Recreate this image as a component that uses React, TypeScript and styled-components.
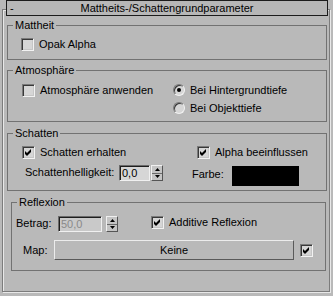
import React from 'react';
import styled, { createGlobalStyle } from 'styled-components';

const GlobalStyle = createGlobalStyle`
  html, body {
    margin: 0;
    padding: 0;
    background: #b9b9b9;
  }
  body {
    font-family: 'Liberation Sans', Arial, sans-serif;
    font-size: 11px;
    color: #000;
  }
  * {
    box-sizing: border-box;
  }
`;

const Screen = styled.div`
  width: 333px;
  height: 296px;
  padding: 0 3px 0 2px;
  background: #b9b9b9;
  overflow: hidden;
`;

const Rollout = styled.div`
  margin-top: 9px;
  width: 328px;
  height: 283px;
  border: 1px solid #7c7c7c;
  box-shadow: inset 1px 1px 0 #e8e8e8, 1px 1px 0 #e8e8e8;
  display: flex;
  flex-direction: column;
`;

const RolloutHeader = styled.div`
  margin: -10px 1px 0 3px;
  height: 16px;
  border: 1px solid #1c1c1c;
  background: #b7b7b7;
  display: grid;
  grid-template-columns: 14px 1fr 14px;
  align-items: center;
  line-height: 14px;
`;

const Collapse = styled.span`
  padding-left: 3px;
`;

const HeaderTitle = styled.span`
  text-align: center;
  white-space: nowrap;
`;

const Group = styled.fieldset<{ $top: number; $left?: number; $right?: number }>`
  margin: ${p => p.$top}px ${p => p.$right ?? 2}px 0 ${p => p.$left ?? 4}px;
  padding: 0;
  border: 1px solid #727272;
  min-inline-size: 0;
`;

const Legend = styled.legend`
  margin-left: 5px;
  padding: 0 2px;
  line-height: 13px;
  font-size: 11px;
`;

const MattBody = styled.div`
  padding: 6px 0 8px 13px;
`;

const AtmoBody = styled.div`
  display: flex;
  padding: 4px 0 4px 14px;
`;

const AtmoLeft = styled.div`
  width: 151px;
  display: flex;
  flex-direction: column;
`;

const RadioList = styled.div`
  display: flex;
  flex-direction: column;
`;

const ShadowBody = styled.div`
  padding: 5px 0 4px 14px;
`;

const TwoCols = styled.div`
  display: grid;
  grid-template-columns: 175px auto;
  height: 14px;
  align-items: center;
`;

const FieldRow = styled.div<{ $mt: number; $h: number; $align?: string }>`
  display: flex;
  align-items: ${p => p.$align ?? 'center'};
  margin-top: ${p => p.$mt}px;
  height: ${p => p.$h}px;
`;

const ReflBody = styled.div`
  padding: 7px 0 10px 4px;
`;

const CheckRow = styled.label<{ $h?: number }>`
  display: flex;
  align-items: center;
  gap: 5px;
  height: ${p => p.$h ?? 13}px;
  line-height: 13px;
  white-space: nowrap;
`;

const Box = styled.span`
  width: 13px;
  height: 13px;
  flex: none;
  background: #d6d6d6;
  border: 1px solid;
  border-color: #7a7a7a #f2f2f2 #f2f2f2 #7a7a7a;
  box-shadow: inset 1px 1px 0 #383838, inset -1px -1px 0 #c6c6c6;
  display: flex;
  align-items: center;
  justify-content: center;
`;

const RadioRow = styled.label`
  display: flex;
  align-items: center;
  gap: 5px;
  height: 18px;
  white-space: nowrap;
`;

const RadioDot = styled.span<{ $on?: boolean }>`
  width: 12px;
  height: 12px;
  flex: none;
  border-radius: 50%;
  background: #d6d6d6;
  border: 1px solid;
  border-color: #7a7a7a #f2f2f2 #f2f2f2 #7a7a7a;
  box-shadow: inset 1px 1px 0 #383838;
  display: flex;
  align-items: center;
  justify-content: center;
  &::after {
    content: '';
    width: 4px;
    height: 4px;
    border-radius: 50%;
    background: ${p => (p.$on ? '#000' : 'transparent')};
  }
`;

const FieldLabel = styled.span<{ $w: number; $ml?: number; $lh?: number }>`
  width: ${p => p.$w}px;
  margin-left: ${p => p.$ml ?? 0}px;
  line-height: ${p => p.$lh ?? 14}px;
  flex: none;
  white-space: nowrap;
`;

const NumField = styled.div<{ $w: number; $disabled?: boolean }>`
  width: ${p => p.$w}px;
  height: 16px;
  flex: none;
  padding-left: 2px;
  line-height: 14px;
  background: ${p => (p.$disabled ? '#c9c9c9' : '#d6d6d6')};
  color: ${p => (p.$disabled ? '#8a8a8a' : '#000')};
  border: 1px solid;
  border-color: #6a6a6a #f0f0f0 #f0f0f0 #6a6a6a;
  box-shadow: inset 1px 1px 0 #1e1e1e;
`;

const Spin = styled.div<{ $ml: number }>`
  width: 12px;
  height: 16px;
  margin-left: ${p => p.$ml}px;
  flex: none;
  display: flex;
  flex-direction: column;
  background: #c4c4c4;
  border: 1px solid;
  border-color: #f0f0f0 #555 #555 #f0f0f0;
`;

const SpinHalf = styled.div`
  flex: 1;
  display: flex;
  align-items: center;
  justify-content: center;
  & + & {
    border-top: 1px solid #6a6a6a;
  }
`;

const Swatch = styled.div`
  width: 67px;
  height: 20px;
  flex: none;
  align-self: flex-end;
  background: #000;
`;

const MapButton = styled.button`
  width: 240px;
  height: 20px;
  flex: none;
  padding: 0;
  font: inherit;
  color: #000;
  background: #b9b9b9;
  border: 1px solid;
  border-color: #ececec #5a5a5a #5a5a5a #ececec;
`;

const Check = () => (
  <svg width="7" height="7" viewBox="0 0 7 7">
    <polygon points="0,2 2,4 6,0 6,3 2,7 0,5" fill="#000" />
  </svg>
);

const Checkbox: React.FC<{ checked?: boolean; label?: string; h?: number }> = ({ checked, label, h }) => (
  <CheckRow $h={h}>
    <Box>{checked && <Check />}</Box>
    {label && <span>{label}</span>}
  </CheckRow>
);

const Spinner: React.FC<{ ml: number }> = ({ ml }) => (
  <Spin $ml={ml}>
    <SpinHalf>
      <svg width="5" height="3" viewBox="0 0 5 3">
        <polygon points="2.5,0 5,3 0,3" fill="#000" />
      </svg>
    </SpinHalf>
    <SpinHalf>
      <svg width="5" height="3" viewBox="0 0 5 3">
        <polygon points="0,0 5,0 2.5,3" fill="#000" />
      </svg>
    </SpinHalf>
  </Spin>
);

const App: React.FC = () => {
  return (
    <Screen>
      <GlobalStyle />
      <Rollout>
        <RolloutHeader>
          <Collapse>-</Collapse>
          <HeaderTitle>Mattheits-/Schattengrundparameter</HeaderTitle>
          <span />
        </RolloutHeader>

        <Group $top={3}>
          <Legend>Mattheit</Legend>
          <MattBody>
            <Checkbox label="Opak Alpha" />
          </MattBody>
        </Group>

        <Group $top={4}>
          <Legend>Atmosphäre</Legend>
          <AtmoBody>
            <AtmoLeft>
              <Checkbox label="Atmosphäre anwenden" h={18} />
            </AtmoLeft>
            <RadioList>
              <RadioRow>
                <RadioDot $on />
                <span>Bei Hintergrundtiefe</span>
              </RadioRow>
              <RadioRow>
                <RadioDot />
                <span>Bei Objekttiefe</span>
              </RadioRow>
            </RadioList>
          </AtmoBody>
        </Group>

        <Group $top={5}>
          <Legend>Schatten</Legend>
          <ShadowBody>
            <TwoCols>
              <Checkbox checked label="Schatten erhalten" />
              <Checkbox checked label="Alpha beeinflussen" />
            </TwoCols>
            <FieldRow $mt={6} $h={21} $align="flex-start">
              <FieldLabel $w={94} $ml={3} $lh={15}>Schattenhelligkeit:</FieldLabel>
              <NumField $w={31}>0,0</NumField>
              <Spinner ml={1} />
              <FieldLabel $w={40} $ml={29} $lh={18}>Farbe:</FieldLabel>
              <Swatch />
            </FieldRow>
          </ShadowBody>
        </Group>

        <Group $top={5} $left={8} $right={3}>
          <Legend>Reflexion</Legend>
          <ReflBody>
            <FieldRow $mt={0} $h={16} $align="flex-start">
              <FieldLabel $w={42}>Betrag:</FieldLabel>
              <NumField $w={44} $disabled>50,0</NumField>
              <Spinner ml={4} />
              <FieldLabel $w={33} />
              <Checkbox checked label="Additive Reflexion" />
            </FieldRow>
            <FieldRow $mt={8} $h={20}>
              <FieldLabel $w={31} $ml={7}>Map:</FieldLabel>
              <MapButton>Keine</MapButton>
              <FieldLabel $w={6} />
              <Checkbox checked />
            </FieldRow>
          </ReflBody>
        </Group>
      </Rollout>
    </Screen>
  );
};

export default App;
